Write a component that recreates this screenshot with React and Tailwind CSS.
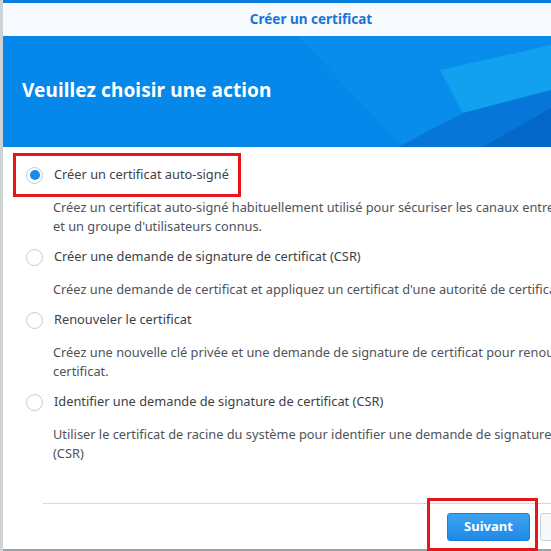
import React from "react";

const options = [
  {
    label: "Créer un certificat auto-signé",
    lines: [
      "Créez un certificat auto-signé habituellement utilisé pour sécuriser les canaux entre",
      "et un groupe d'utilisateurs connus.",
    ],
    checked: true,
  },
  {
    label: "Créer une demande de signature de certificat (CSR)",
    lines: ["Créez une demande de certificat et appliquez un certificat d'une autorité de certifica"],
  },
  {
    label: "Renouveler le certificat",
    lines: [
      "Créez une nouvelle clé privée et une demande de signature de certificat pour renou",
      "certificat.",
    ],
  },
  {
    label: "Identifier une demande de signature de certificat (CSR)",
    lines: [
      "Utiliser le certificat de racine du système pour identifier une demande de signature",
      "(CSR)",
    ],
  },
];

function Radio({ checked }) {
  return (
    <span className="w-[17px] h-[17px] rounded-full border border-[#c5ccd3] bg-white flex items-center justify-center shrink-0">
      {checked && <span className="w-[10px] h-[10px] rounded-full bg-[#1a8ae8]" />}
    </span>
  );
}

function App() {
  return (
    <div
      className="w-[551px] h-[551px] overflow-hidden bg-white flex relative"
      style={{ fontFamily: '"Noto Sans", "DejaVu Sans", sans-serif' }}
    >
      <div className="w-[3px] bg-[#cfd3d6] shrink-0" />
      <div className="flex-1 flex flex-col min-w-0">
        <div className="h-[3px] bg-[#0a7ee0]" />
        <div className="h-[33px] flex items-center justify-center pl-[68px] bg-[#f7faff] text-[#1a74d6] text-[13.5px] font-bold">
          Créer un certificat
        </div>
        <div className="h-[111px] relative bg-[#0688ea] flex items-center px-[19px] overflow-hidden">
          <svg
            className="absolute inset-0"
            width="548"
            height="111"
            viewBox="0 0 548 111"
          >
            <polygon points="295,0 548,0 548,111 400,111" fill="#0d98f0" opacity="0.35" />
            <polygon points="437,34 548,9 548,54 460,77" fill="#1bb2f2" opacity="0.55" />
            <polygon points="395,111 460,77 548,54 548,111" fill="#0570d2" opacity="0.75" />
            <polygon points="480,111 548,72 548,111" fill="#0462c2" opacity="0.8" />
          </svg>
          <h1 className="relative text-white text-[19px] font-bold tracking-[0.1px] mt-[-2px]">
            Veuillez choisir une action
          </h1>
        </div>
        <div className="flex-1 flex flex-col pt-[18px] pl-[20px] text-[12.8px] whitespace-nowrap">
          {options.map((o, i) => (
            <div key={i} className={i > 0 ? "mt-[11px]" : ""}>
              <div className="h-[20px] flex items-center gap-[11px] pl-[3px] text-[#3d4147]">
                <Radio checked={o.checked} />
                <span>{o.label}</span>
              </div>
              <div className="mt-[13px] pl-[30px] leading-[19px] text-[#4f5359]">
                {o.lines.map((l, j) => (
                  <div key={j}>{l}</div>
                ))}
              </div>
            </div>
          ))}
          <div className="flex-1" />
          <div className="ml-[20px] border-t border-dotted border-[#d9c8d8] h-[1px] bg-[#e4e4e4]" />
          <div className="h-[45px] flex items-center justify-end gap-[10px] mr-[-49px]">
            <button className="w-[83px] h-[28px] rounded-[3px] bg-gradient-to-b from-[#3aa3f2] to-[#1f8ae6] border border-[#1a80d8] text-white text-[13px] font-bold">
              Suivant
            </button>
            <button className="w-[60px] h-[28px] rounded-[3px] bg-[#f6f8fa] border border-[#ccd2d8]" />
          </div>
        </div>
        <div className="h-[2px] bg-[#9aa0a4]" />
      </div>

      <div className="absolute left-[13px] top-[153px] w-[228px] h-[44px] border-[3px] border-[#e8141c]" />
      <div className="absolute left-[427px] top-[498px] w-[111px] h-[53px] border-[3px] border-[#e8141c]" />
    </div>
  );
}

export default App;
